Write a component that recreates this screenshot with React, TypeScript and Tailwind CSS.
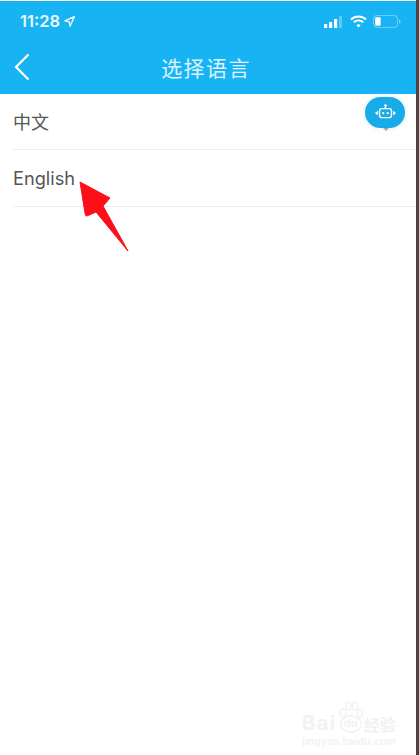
export default function App() {
  const cjk = { fontFamily: '"Noto Sans CJK SC", "Noto Sans", sans-serif' };
  return (
    <div className="relative flex h-[755px] w-[419px] overflow-hidden bg-white font-['Inter','Liberation_Sans',sans-serif]">
      <main className="flex w-[416px] flex-col bg-white">
        <header className="mt-px flex h-[93px] shrink-0 flex-col bg-[#17b3f3] text-white">
          <div className="flex h-[39px] items-center justify-between pl-5 pr-[15px] pt-[2px]">
            <div className="flex items-center gap-[4px]">
              <span className="text-[16.5px] font-semibold leading-none text-white/90">11:28</span>
              <svg width="11" height="11" viewBox="0 0 11 11" className="opacity-90">
                <path d="M10.5.5 .8 4.8l4.4.9.9 4.5z" fill="none" stroke="white" strokeWidth="1.4" strokeLinejoin="round" />
              </svg>
            </div>
            <div className="flex items-center gap-[6px]">
              <svg width="18" height="12" viewBox="0 0 18 12">
                <rect x="0" y="8" width="3.2" height="4" rx=".6" fill="white" />
                <rect x="5" y="6" width="3.2" height="6" rx=".6" fill="white" />
                <rect x="10" y="3" width="3.2" height="9" rx=".6" fill="white" />
                <rect x="15" y="0" width="3" height="12" rx=".6" fill="white" fillOpacity=".3" />
              </svg>
              <svg width="17" height="13" viewBox="0 0 17 13" className="ml-[2px]">
                <path d="M1 4.4C5.4.4 11.6.4 16 4.4" fill="none" stroke="white" strokeWidth="2" />
                <path d="M3.8 7.2c2.8-2.4 6.6-2.4 9.4 0" fill="none" stroke="white" strokeWidth="2" />
                <path d="M6.3 9.9c1.3-1 3.1-1 4.4 0L8.5 12.6z" fill="white" />
              </svg>
              <svg width="28" height="13" viewBox="0 0 28 13">
                <rect x=".6" y=".6" width="23.8" height="11.8" rx="3" fill="none" stroke="white" strokeOpacity=".4" />
                <rect x="2.2" y="2.2" width="5.5" height="8.6" rx="1.2" fill="white" />
                <path d="M26 4.5c1 .3 1.5 1 1.5 2s-.5 1.7-1.5 2z" fill="white" fillOpacity=".45" />
              </svg>
            </div>
          </div>
          <div className="relative flex flex-1 items-center justify-center">
            <svg width="16" height="28" viewBox="0 0 16 28" className="absolute left-[14px] top-[13px]">
              <path d="M14.5 1.5 2 14l12.5 12.5" fill="none" stroke="white" strokeWidth="2.2" />
            </svg>
            <h1 className="ml-[-4px] text-[21px] font-normal leading-none tracking-[1.4px] text-white/85" style={cjk}>选择语言</h1>
          </div>
        </header>
        <ul className="pl-[13px] text-[#555555]">
          <li className="flex h-[56px] items-center border-b border-[#ececec]" style={cjk}>
            <span className="text-[18px]">中文</span>
          </li>
          <li className="flex h-[57px] items-center border-b border-[#ececec]">
            <span className="text-[18.2px] leading-none">English</span>
          </li>
        </ul>
      </main>
      <div className="w-[3px] shrink-0 bg-[#454545]" />

      {/* floating robot */}
      <div className="absolute left-[365px] top-[97px] flex h-[31px] w-[40px] items-center justify-center rounded-full bg-[#17ace8] shadow-[0_0_6px_rgba(200,220,235,0.55)]">
        <svg width="25" height="17" viewBox="0 0 27 20">
          <path d="M13.5 1v4" stroke="white" strokeWidth="1.6" />
          <circle cx="13.5" cy="1.8" r="1.5" fill="white" />
          <rect x="6.5" y="5.5" width="14" height="10.5" rx="2.5" fill="none" stroke="white" strokeWidth="1.6" />
          <circle cx="10.8" cy="10.8" r="1.3" fill="white" />
          <circle cx="16.2" cy="10.8" r="1.3" fill="white" />
          <path d="M4.5 8 1 10.7l3.5 2.7zM22.5 8l3.5 2.7-3.5 2.7z" fill="white" />
        </svg>
      </div>
      <div className="absolute left-[383px] top-[128px] h-0 w-0 border-x-[3px] border-t-[3px] border-x-transparent border-t-[#9aa7ad]" />

      {/* red annotation arrow */}
      <svg width="60" height="76" viewBox="0 0 60 76" className="absolute left-[75px] top-[178px]">
        <path d="M5 4 35 20 28 28 53 73 21 34 12 38Q10 38 10 35Z" fill="#fb0f18" stroke="#fb0f18" strokeWidth="1" strokeLinejoin="round" />
      </svg>

      {/* watermark */}
      <div className="absolute left-[302px] top-[701px] w-[92px] text-[#f2f2f2]">
        <div className="flex items-end font-bold leading-none">
          <span className="text-[20px] tracking-[1.5px]">Bai</span>
          <div className="relative ml-[2px] h-[32px] w-[24px] shrink-0">
            <svg width="24" height="32" viewBox="0 0 24 32">
              <g fill="none" stroke="#f2f2f2" strokeWidth="1.5">
                <ellipse cx="12" cy="23" rx="10.5" ry="8" />
                <ellipse cx="4" cy="12" rx="2.8" ry="4" />
                <ellipse cx="9.5" cy="5" rx="2.8" ry="4" />
                <ellipse cx="16" cy="5" rx="2.8" ry="4" />
                <ellipse cx="21" cy="12" rx="2.4" ry="4" />
              </g>
            </svg>
            <span className="absolute bottom-[4px] left-[5px] text-[11px] leading-none">du</span>
          </div>
          <span className="ml-[1px] mb-[1px] whitespace-nowrap text-[16px]" style={cjk}>经验</span>
        </div>
        <div className="mt-[4px] whitespace-nowrap text-[10.5px] font-semibold leading-none">jingyan.baidu.com</div>
      </div>
    </div>
  );
}
